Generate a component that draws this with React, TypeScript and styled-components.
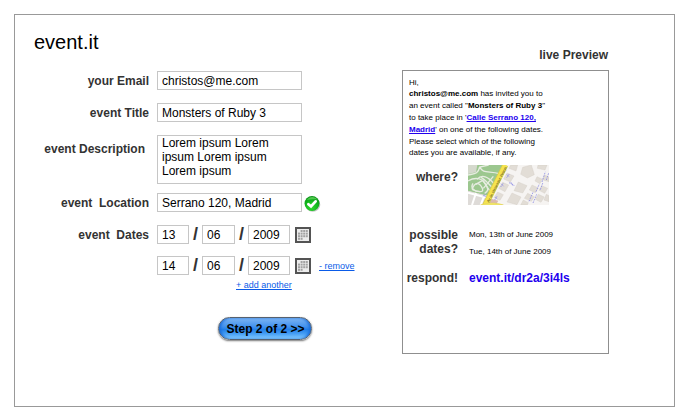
import React from "react";
import styled, { createGlobalStyle } from "styled-components";

const GlobalStyle = createGlobalStyle`
  * { box-sizing: border-box; }
  body {
    margin: 0;
    background: #fff;
    color: #000;
    font: 12px/14px "Liberation Sans", Arial, sans-serif;
  }
`;

const Page = styled.main`
  min-height: calc(100vh - 27px);
  margin: 14px 13px 13px 14px;
  padding: 15px 65px 51px 19px;
  border: 1px solid #999;
`;

const Columns = styled.div`
  display: grid;
  grid-template-columns: minmax(0, 5fr) minmax(207px, 2fr);
`;

const Title = styled.h1`
  margin: 0 0 17px;
  font-size: 20px;
  line-height: 24px;
  font-weight: 400;
`;

const Form = styled.form`
  display: flex;
  flex-direction: column;
`;

const Row = styled.div<{ $gap?: number }>`
  display: grid;
  grid-template-columns: 115px minmax(0, 1fr);
  column-gap: 8px;
  align-items: start;
  margin-bottom: ${(p) => p.$gap ?? 13}px;
`;

const Label = styled.label<{ $offset?: boolean }>`
  padding: ${(p) => (p.$offset ? "7px 4px 0 0" : "3px 0 0")};
  color: #333;
  font-weight: 700;
  text-align: right;
  white-space: pre;
`;

const Field = styled.div`
  display: flex;
  align-items: center;
  gap: 2px;
  height: 19px;
`;

const TextInput = styled.input<{ $width?: number }>`
  width: ${(p) => p.$width ?? 145}px;
  height: 19px;
  padding: 0 4px;
  border: 1px solid #c6c6c6;
  border-radius: 0;
  background: #fff;
  color: #000;
  font: inherit;
`;

const TextArea = styled.textarea`
  display: block;
  width: 145px;
  height: 49px;
  padding: 0 4px;
  border: 1px solid #c6c6c6;
  border-radius: 0;
  background: #fff;
  color: #000;
  font: inherit;
  overflow: hidden;
  resize: none;
`;

const Slash = styled.span`
  width: 13px;
  color: #333;
  font-size: 18px;
  font-weight: 700;
  line-height: 19px;
  text-align: center;
`;

const DateParts = styled.div`
  display: flex;
  align-items: center;
  height: 19px;
`;

const IconButton = styled.button`
  display: flex;
  margin-left: 5px;
  padding: 0;
  border: 0;
  background: none;
`;

const SmallLink = styled.a`
  color: #0a5be8;
  font-size: 9px;
  line-height: 10px;
  text-decoration: underline;
`;

const RemoveLink = styled(SmallLink)`
  margin-left: 8px;
`;

const AddRow = styled.div`
  display: flex;
  padding: 5px 0 0 202px;
`;

const Actions = styled.div`
  display: flex;
  padding: 27px 0 0 184px;
`;

const StepButton = styled.button`
  height: 23px;
  padding: 0 6px 0 7px;
  min-width: 94px;
  border: 1px solid #56616f;
  border-radius: 12px;
  background: linear-gradient(#7db5f3 0, #4593ee 40%, #2380e8 55%, #469ff5 75%, #86ccff 100%);
  box-shadow: 0 1px 2px #777, inset 3px 0 3px -1px #1a6cda, inset -3px 0 3px -1px #1a6cda;
  color: #000;
  font: 700 12px/14px "Liberation Sans", Arial, sans-serif;
  white-space: nowrap;
`;

const PreviewColumn = styled.section`
  display: flex;
  flex-direction: column;
  margin-top: -23px;
`;

const PreviewTitle = styled.h2`
  margin: 0 1px 8px 0;
  color: #333;
  font-size: 12px;
  line-height: 14px;
  text-align: right;
`;

const PreviewPanel = styled.div`
  min-height: 284px;
  padding: 6px 3px 20px;
  border: 1px solid #8f8f8f;
`;

const Message = styled.div`
  max-width: 143px;
  padding-left: 3px;
  font-size: 8px;
  line-height: 11px;
`;

const Line = styled.p<{ $loose?: boolean }>`
  margin: 0;
  line-height: ${(p) => (p.$loose ? 12 : 11)}px;
`;

const PlaceLink = styled.a`
  color: #20e;
  font-weight: 700;
  text-decoration: underline;
`;

const Details = styled.dl`
  display: grid;
  grid-template-columns: 52px minmax(0, 1fr);
  column-gap: 10px;
  margin: 7px 0 0;
`;

const Term = styled.dt<{ $top?: number }>`
  padding-top: ${(p) => p.$top ?? 0}px;
  color: #333;
  font-weight: 700;
  text-align: right;
`;

const Value = styled.dd<{ $bottom?: number }>`
  margin: 0 0 ${(p) => p.$bottom ?? 0}px;
`;

const DateList = styled.ul`
  margin: 0;
  padding: 2px 0 0 1px;
  list-style: none;
  font-size: 8px;
  line-height: 10px;
`;

const DateItem = styled.li`
  padding-bottom: 7px;
`;

const RespondLink = styled.a`
  padding-left: 1px;
  color: #20e;
  font-weight: 700;
  text-decoration: none;
`;

const CheckIcon = () => (
  <svg width="17" height="18" viewBox="0 0 17 18" aria-label="Location found" role="img">
    <defs>
      <radialGradient id="green" cx="45%" cy="75%" r="75%">
        <stop offset="0" stopColor="#2fdc2f" />
        <stop offset="0.6" stopColor="#10b31c" />
        <stop offset="1" stopColor="#0b8f18" />
      </radialGradient>
    </defs>
    <ellipse cx="8.8" cy="10.8" rx="7.5" ry="7" fill="#aaa" opacity="0.7" />
    <circle cx="8" cy="9.5" r="7.5" fill="url(#green)" />
    <path d="M3 6C5 2 11 2 13.5 5.5C10 5 6 5 3 6Z" fill="#7be36f" opacity="0.6" />
    <path d="M4.4 10.2L7 12.4L11.6 7.4" fill="none" stroke="#fff" strokeWidth="2.8" strokeLinecap="round" />
  </svg>
);

const calendarRows = [
  [1, 2, 3],
  [0, 1, 2, 3],
  [0, 1, 2, 3],
  [0, 1],
];

const CalendarIcon = () => (
  <svg width="16" height="16" viewBox="0 0 16 16" aria-hidden="true">
    <rect width="16" height="16" fill="#545454" />
    <rect x="2" y="2" width="12" height="12" fill="#ececec" />
    {calendarRows.map((cells, row) =>
      cells.map((col) => (
        <rect key={`${row}-${col}`} x={3 + col * 2.6} y={3 + row * 2.6} width="2" height="2" fill="#a2a2a2" />
      )),
    )}
  </svg>
);

const MapPicture = () => (
  <svg width="81" height="40" viewBox="0 0 243 120" preserveAspectRatio="none" role="img" aria-label="Map of Calle Serrano 120, Madrid" display="block">
    <rect width="243" height="120" fill="#f6f4f2" />
    <path d="M0 0H108L60 94L0 78Z" fill="#9cc78f" />
    <path d="M0 0H28L24 22L0 27Z" fill="#d5d9cd" />
    <g fill="none" stroke="#e7ece1" strokeWidth="4">
      <path d="M0 30C20 26 30 28 35 6L62 0M36 6C43 27 66 17 93 26" />
      <path d="M0 48C22 35 42 40 52 56S62 78 50 85M12 73C20 52 33 50 42 68S28 80 12 73" />
      <path d="M27 43C42 26 61 36 77 55M23 58L44 46L67 80M39 37C51 43 60 55 72 67" />
      <path d="M15 55C7 66 15 80 36 80M46 70L76 34" />
    </g>
    <path d="M0 77L60 92L52 120H0Z" fill="#dedbd8" />
    <path d="M0 83L57 98M24 84L12 120M49 91L38 120" stroke="#fff" strokeWidth="6" />
    <path d="M69 101L91 107L84 120H62Z" fill="#dbbab0" />
    <g fill="#e2ddd6" stroke="#cfc8bf" strokeWidth="1">
      <path d="M128 0H149L144 18L123 10Z" />
      <path d="M117 24L138 33L127 51L107 42Z" />
      <path d="M104 52L122 60L111 80L92 70Z" />
      <path d="M89 81L106 89L96 106L78 98Z" />
      <path d="M164 7L190 0L199 29L178 39L158 28Z" />
      <path d="M151 51L177 62L164 84L138 77Z" />
      <path d="M132 84L159 96L147 119L117 111Z" />
      <path d="M210 0H237L231 15L208 10ZM207 35L222 42L216 56L201 48Z" />
      <path d="M192 60L211 69L202 83L184 75ZM179 85L199 95L190 109L169 100Z" />
      <path d="M166 105L181 113L178 120H158ZM230 30L243 36V50L223 44ZM221 62L239 70L230 85L213 76Z" />
      <path d="M211 88L229 96L219 112L202 103ZM235 88L243 92V110L228 105Z" />
    </g>
    <path d="M112 0L52 120" stroke="#d9c948" strokeWidth="18" />
    <path d="M112 0L52 120" stroke="#f5e44f" strokeWidth="14" />
    <path d="M38 120C61 112 81 112 106 120Z" fill="#f4eb70" stroke="#e4d356" strokeWidth="2" />
    <text transform="translate(63 113) rotate(-63)" fontFamily="Liberation Sans, sans-serif" fontSize="11" fill="#39351a">Av de Menendez Pelayo</text>
    <g fill="none" stroke="#8f8fe4" strokeWidth="2.5" strokeDasharray="5 3">
      <path d="M46 94L54 86M98 66L106 54M116 38L124 27M123 53L139 61M80 105L87 94" />
      <path d="M183 109L195 82M195 114L206 88M204 80L214 57M217 74L225 52M222 51L232 20M235 45L242 24" />
    </g>
    <g fill="none" stroke="#8f8fe4" strokeWidth="2">
      <path d="M45 90L54 96M99 56L107 64M116 29L124 35M128 51L136 63M81 96L88 102" />
    </g>
  </svg>
);

interface EventDate {
  day: string;
  month: string;
  year: string;
}

const DateFields = ({ date, id, children }: { date: EventDate; id: string; children?: React.ReactNode }) => (
  <DateParts>
    <TextInput id={id} $width={32} defaultValue={date.day} aria-label="Day" />
    <Slash>/</Slash>
    <TextInput $width={33} defaultValue={date.month} aria-label="Month" />
    <Slash>/</Slash>
    <TextInput $width={42} defaultValue={date.year} aria-label="Year" />
    <IconButton type="button" aria-label="Choose date">
      <CalendarIcon />
    </IconButton>
    {children}
  </DateParts>
);

export default function App() {
  return (
    <>
      <GlobalStyle />
      <Page>
        <Title>event.it</Title>
        <Columns>
          <Form onSubmit={(e) => e.preventDefault()}>
            <Row>
              <Label htmlFor="email">your Email</Label>
              <TextInput id="email" defaultValue="christos@me.com" />
            </Row>
            <Row>
              <Label htmlFor="title">event Title</Label>
              <TextInput id="title" defaultValue="Monsters of Ruby 3" />
            </Row>
            <Row $gap={9}>
              <Label htmlFor="description" $offset>event Description</Label>
              <TextArea id="description" defaultValue="Lorem ipsum Lorem ipsum Lorem ipsum Lorem ipsum" />
            </Row>
            <Row>
              <Label htmlFor="location">{"event  Location"}</Label>
              <Field>
                <TextInput id="location" defaultValue="Serrano 120, Madrid" />
                <CheckIcon />
              </Field>
            </Row>
            <Row $gap={12}>
              <Label htmlFor="date-1">{"event  Dates"}</Label>
              <DateFields id="date-1" date={{ day: "13", month: "06", year: "2009" }} />
            </Row>
            <Row $gap={0}>
              <span />
              <DateFields id="date-2" date={{ day: "14", month: "06", year: "2009" }}>
                <RemoveLink href="#remove">- remove</RemoveLink>
              </DateFields>
            </Row>
            <AddRow>
              <SmallLink href="#add">+ add another</SmallLink>
            </AddRow>
            <Actions>
              <StepButton type="submit">Step 2 of 2 &gt;&gt;</StepButton>
            </Actions>
          </Form>
          <PreviewColumn>
            <PreviewTitle>live Preview</PreviewTitle>
            <PreviewPanel>
              <Message>
                <Line>Hi,</Line>
                <Line $loose>
                  <b>christos@me.com</b> has invited you to an event called "<b>Monsters of Ruby 3</b>" to take place in '
                  <PlaceLink href="#map">Calle Serrano 120, Madrid</PlaceLink>' on one of the following dates.
                </Line>
                <Line>Please select which of the following dates you are available, if any.</Line>
              </Message>
              <Details>
                <Term $top={5}>where?</Term>
                <Value $bottom={23}>
                  <MapPicture />
                </Value>
                <Term>possible dates?</Term>
                <Value $bottom={7}>
                  <DateList>
                    <DateItem>Mon, 13th of June 2009</DateItem>
                    <DateItem>Tue, 14th of June 2009</DateItem>
                  </DateList>
                </Value>
                <Term>respond!</Term>
                <Value>
                  <RespondLink href="#respond">event.it/dr2a/3i4ls</RespondLink>
                </Value>
              </Details>
            </PreviewPanel>
          </PreviewColumn>
        </Columns>
      </Page>
    </>
  );
}
